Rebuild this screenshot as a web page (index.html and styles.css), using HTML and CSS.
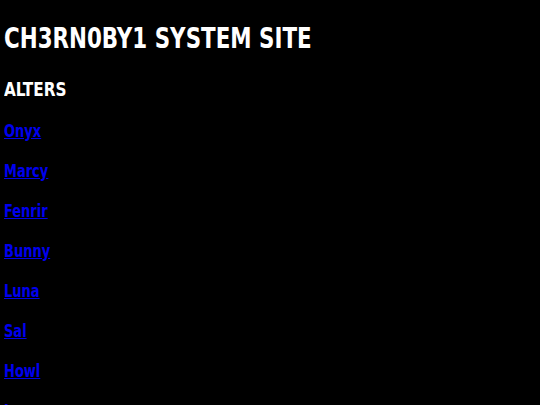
FILE: index.html
```html
<!DOCTYPE html>
<html>
<head>
<meta charset="utf-8">
<link rel="stylesheet" href="styles.css">
</head>
<body>
<h1 class="title">CH3RN0BY1 SYSTEM SITE</h1>
<h2 class="section">ALTERS</h2>
<p class="item"><a href="#">Onyx</a></p>
<p class="item"><a href="#">Marcy</a></p>
<p class="item"><a href="#">Fenrir</a></p>
<p class="item"><a href="#">Bunny</a></p>
<p class="item"><a href="#">Luna</a></p>
<p class="item"><a href="#">Sal</a></p>
<p class="item"><a href="#">Howl</a></p>
<p class="item"><a href="#">Lux</a></p>
</body>
</html>
```
FILE: styles.css
```css
html, body {
  background: #000;
}
body {
  margin: 4px;
  color: #fff;
  font-family: "DejaVu Sans Condensed", "DejaVu Sans", sans-serif;
  font-stretch: condensed;
  font-weight: bold;
}
.title,
.section,
.item {
  transform: scaleX(0.85);
  transform-origin: left center;
}
.title {
  font-size: 28px;
  margin: 17px 0 0;
  line-height: 36px;
}
.section {
  font-size: 20px;
  margin: 18px 0 8px;
  line-height: 28px;
}
.item {
  font-size: 17px;
  margin: 0;
  line-height: 40px;
}
.item a {
  color: #0000ee;
}
```
